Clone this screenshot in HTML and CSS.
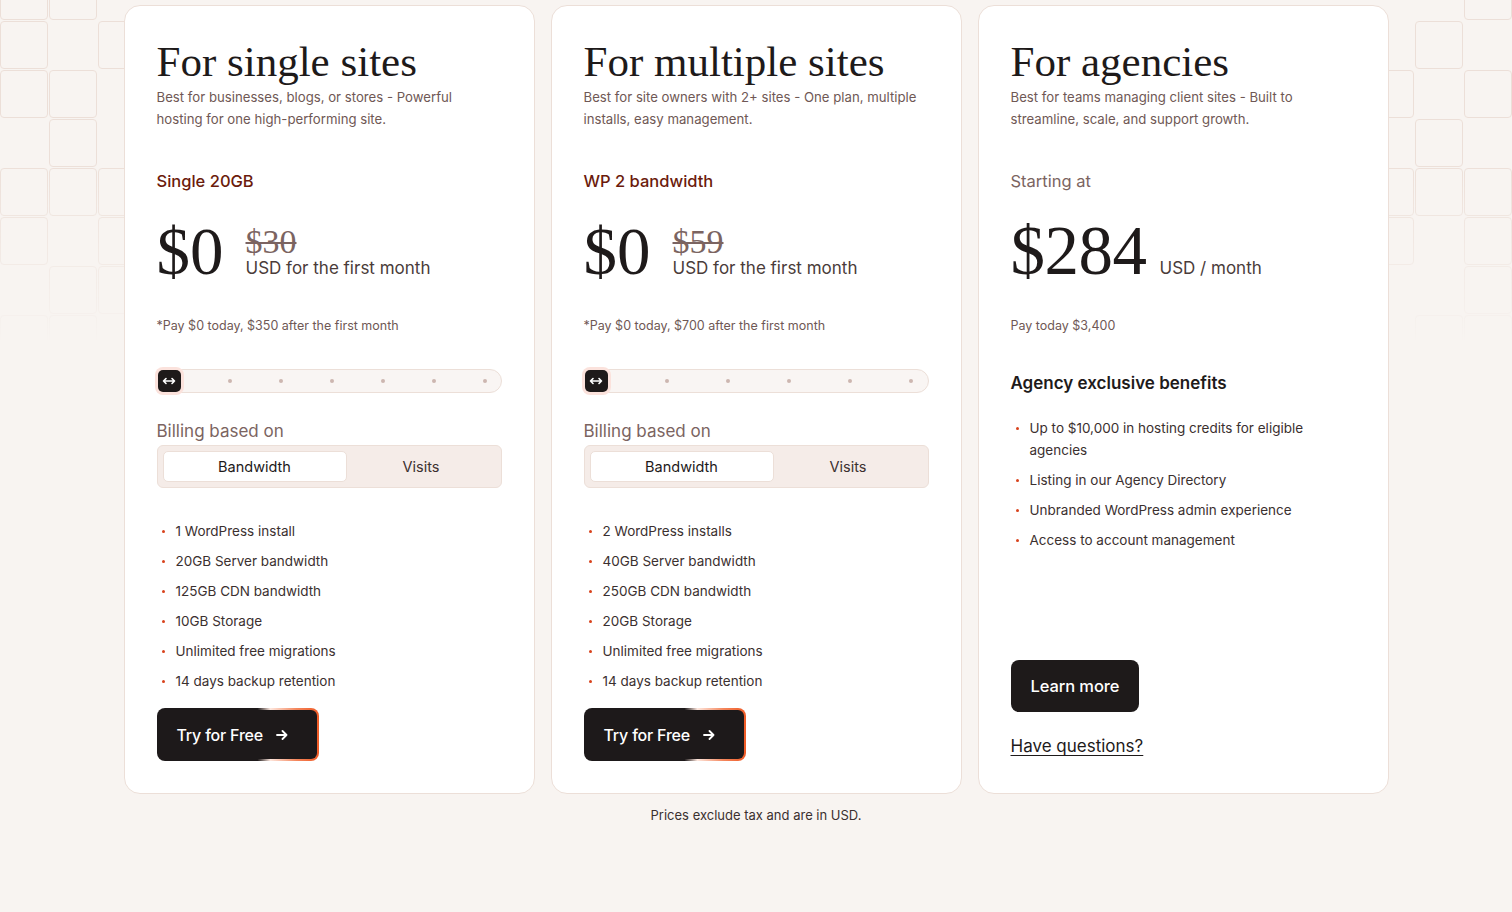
FILE: index.html
```html
<!DOCTYPE html>
<html lang="en">

<head>
    <meta charset="UTF-8">
    <meta name="viewport" content="width=device-width, initial-scale=1.0">
    <title>Plans</title>
    <link rel="stylesheet" href="styles.css">
</head>

<body>
    <div class="page">
        <!-- decorative tile grid behind the cards -->
        <div class="tiles tiles-left">
            <i class="on"></i><i class="on"></i><i></i>
            <i class="on"></i><i></i><i class="on"></i>
            <i class="on"></i><i class="on"></i><i></i>
            <i></i><i class="on"></i><i></i>
            <i class="on"></i><i class="on"></i><i class="on"></i>
            <i class="on"></i><i></i><i class="on"></i>
            <i></i><i class="on"></i><i class="on"></i>
            <i class="on"></i><i class="on"></i><i></i>
        </div>
        <div class="tiles tiles-right">
            <i></i><i></i><i class="on"></i>
            <i></i><i class="on"></i><i></i>
            <i class="on"></i><i></i><i class="on"></i>
            <i></i><i class="on"></i><i></i>
            <i class="on"></i><i class="on"></i><i class="on"></i>
            <i class="on"></i><i></i><i class="on"></i>
            <i></i><i></i><i class="on"></i>
            <i></i><i class="on"></i><i class="on"></i>
        </div>

        <div class="plans">
            <section class="card">
                <h2 class="card-title">For single sites</h2>
                <p class="card-desc">Best for businesses, blogs, or stores - Powerful hosting for one high-performing site.</p>
                <p class="plan-name">Single 20GB</p>
                <div class="price price-promo">
                    <span class="price-amount">$0</span>
                    <div class="price-side">
                        <s class="price-old">$30</s>
                        <span class="price-unit">USD for the first month</span>
                    </div>
                </div>
                <p class="price-note">*Pay $0 today, $350 after the first month</p>

                <div class="slider">
                    <span class="slider-handle">
                        <svg width="14" height="8" viewBox="0 0 14 8" fill="none" stroke="#fff" stroke-width="1.6" stroke-linecap="round" stroke-linejoin="round"><path d="M1.5 4h11M4 1.5L1.5 4 4 6.5M10 1.5l2.5 2.5L10 6.5"/></svg>
                    </span>
                    <span class="dot"></span><span class="dot"></span><span class="dot"></span>
                    <span class="dot"></span><span class="dot"></span><span class="dot"></span>
                </div>

                <p class="billing-label">Billing based on</p>
                <div class="segment">
                    <button class="segment-btn active">Bandwidth</button>
                    <button class="segment-btn">Visits</button>
                </div>

                <ul class="features">
                    <li>1 WordPress install</li>
                    <li>20GB Server bandwidth</li>
                    <li>125GB CDN bandwidth</li>
                    <li>10GB Storage</li>
                    <li>Unlimited free migrations</li>
                    <li>14 days backup retention</li>
                </ul>

                <a class="btn btn-try" href="#">Try for Free
                    <svg width="12" height="10" viewBox="0 0 12 10" fill="none" stroke="#fff" stroke-width="1.8" stroke-linecap="round" stroke-linejoin="round"><path d="M1 5h9.5M6.5 1l4 4-4 4"/></svg>
                </a>
            </section>

            <section class="card">
                <h2 class="card-title">For multiple sites</h2>
                <p class="card-desc">Best for site owners with 2+ sites - One plan, multiple installs, easy management.</p>
                <p class="plan-name">WP 2 bandwidth</p>
                <div class="price price-promo">
                    <span class="price-amount">$0</span>
                    <div class="price-side">
                        <s class="price-old">$59</s>
                        <span class="price-unit">USD for the first month</span>
                    </div>
                </div>
                <p class="price-note">*Pay $0 today, $700 after the first month</p>

                <div class="slider">
                    <span class="slider-handle">
                        <svg width="14" height="8" viewBox="0 0 14 8" fill="none" stroke="#fff" stroke-width="1.6" stroke-linecap="round" stroke-linejoin="round"><path d="M1.5 4h11M4 1.5L1.5 4 4 6.5M10 1.5l2.5 2.5L10 6.5"/></svg>
                    </span>
                    <span class="dot"></span><span class="dot"></span><span class="dot"></span>
                    <span class="dot"></span><span class="dot"></span>
                </div>

                <p class="billing-label">Billing based on</p>
                <div class="segment">
                    <button class="segment-btn active">Bandwidth</button>
                    <button class="segment-btn">Visits</button>
                </div>

                <ul class="features">
                    <li>2 WordPress installs</li>
                    <li>40GB Server bandwidth</li>
                    <li>250GB CDN bandwidth</li>
                    <li>20GB Storage</li>
                    <li>Unlimited free migrations</li>
                    <li>14 days backup retention</li>
                </ul>

                <a class="btn btn-try" href="#">Try for Free
                    <svg width="12" height="10" viewBox="0 0 12 10" fill="none" stroke="#fff" stroke-width="1.8" stroke-linecap="round" stroke-linejoin="round"><path d="M1 5h9.5M6.5 1l4 4-4 4"/></svg>
                </a>
            </section>

            <section class="card">
                <h2 class="card-title">For agencies</h2>
                <p class="card-desc">Best for teams managing client sites - Built to streamline, scale, and support growth.</p>
                <p class="plan-start">Starting at</p>
                <div class="price">
                    <span class="price-amount price-large">$284</span>
                    <div class="price-side">
                        <span class="price-unit">USD / month</span>
                    </div>
                </div>
                <p class="price-note">Pay today $3,400</p>

                <h3 class="benefits-title">Agency exclusive benefits</h3>
                <ul class="features benefits">
                    <li>Up to $10,000 in hosting credits for eligible agencies</li>
                    <li>Listing in our Agency Directory</li>
                    <li>Unbranded WordPress admin experience</li>
                    <li>Access to account management</li>
                </ul>

                <div class="card-actions">
                    <a class="btn" href="#">Learn more</a>
                    <a class="questions" href="#">Have questions?</a>
                </div>
            </section>
        </div>

        <p class="footnote">Prices exclude tax and are in USD.</p>
    </div>
</body>

</html>
```

FILE: styles.css
```css
:root {
    --page-bg: #f8f4f1;
    --ink: #1e1a1a;
    --text: #3b302f;
    --muted: #6f5855;
    --soft: #7b6461;
    --line: #ecdfd8;
    --accent: #d8421c;
    --plan-red: #6b1b0c;
    --serif: 'Liberation Serif', 'Times New Roman', serif;
    --sans: 'Inter', 'Liberation Sans', sans-serif;
}

* {
    box-sizing: border-box;
}

body {
    margin: 0;
    background: var(--page-bg);
    font-family: var(--sans);
    color: var(--text);
}

.page {
    position: relative;
    padding-top: 5px;
    min-height: 912px;
    overflow: hidden;
}

/* background tiles */
.tiles {
    position: absolute;
    top: -28px;
    display: grid;
    grid-template-columns: repeat(3, 48px);
    grid-auto-rows: 48px;
    gap: 1px;
    -webkit-mask-image: linear-gradient(to bottom, #000 0, #000 190px, transparent 370px);
    mask-image: linear-gradient(to bottom, #000 0, #000 190px, transparent 370px);
}

.tiles-left {
    left: 0;
}

.tiles-right {
    right: 0;
}

.tiles i {
    display: block;
    border-radius: 4px;
}

.tiles i.on {
    border: 1px solid #ecdfd8;
}

.plans {
    position: relative;
    z-index: 1;
    display: grid;
    grid-template-columns: repeat(3, 411px);
    gap: 16px;
    justify-content: center;
}

.card {
    display: flex;
    flex-direction: column;
    background: #fff;
    border: 1px solid var(--line);
    border-radius: 16px;
    padding: 32px;
}

.card p,
.card h2,
.card h3 {
    margin: 0;
}

.card-title {
    font-family: var(--serif);
    font-weight: 400;
    font-size: 43px;
    line-height: 48px;
    color: var(--ink);
}

.card-desc {
    max-width: 340px;
    font-size: 13.2px;
    line-height: 22px;
    color: var(--muted);
}

.plan-name,
.plan-start {
    margin-top: 39px !important;
    font-size: 16.5px;
    line-height: 24px;
    font-weight: 500;
    color: var(--plan-red);
}

.plan-start {
    font-weight: 400;
    color: var(--soft);
}

.price {
    display: flex;
    align-items: last baseline;
    gap: 13px;
    margin-top: 25px;
    height: 66px;
}

.price-promo {
    gap: 22px;
}

.price-amount {
    font-family: var(--serif);
    font-size: 67px;
    line-height: 66px;
    color: var(--ink);
}

.price-large {
    font-size: 69px;
    letter-spacing: -0.5px;
}

.price-side {
    display: flex;
    flex-direction: column;
}

.price-old {
    font-family: var(--serif);
    font-size: 34px;
    line-height: 30px;
    color: var(--soft);
    text-decoration-thickness: 2px;
}

.price-unit {
    font-size: 17px;
    line-height: 22px;
    color: #4a3c3a;
}

.price-note {
    margin-top: 32px !important;
    font-size: 12.5px;
    line-height: 20px;
    color: var(--muted);
}

/* plan size slider */
.slider {
    display: flex;
    align-items: center;
    justify-content: space-between;
    margin-top: 33px;
    height: 24px;
    padding: 0 14px 0 0;
    background: #f9f5f3;
    border: 1px solid var(--line);
    border-radius: 12px;
}

.slider-handle {
    display: flex;
    align-items: center;
    justify-content: center;
    width: 23px;
    height: 22px;
    background: var(--ink);
    border-radius: 5px;
    box-shadow: 0 0 0 3px #fbe2dc;
}

.dot {
    width: 4px;
    height: 4px;
    border-radius: 50%;
    background: #cdb6b0;
}

.billing-label {
    margin-top: 26px !important;
    font-size: 17px;
    line-height: 24px;
    color: var(--soft);
}

.segment {
    display: grid;
    grid-template-columns: 184px 1fr;
    margin-top: 2px;
    height: 43px;
    padding: 5px;
    background: #f5ece8;
    border: 1px solid var(--line);
    border-radius: 6px;
}

.segment-btn {
    font-family: var(--sans);
    font-size: 14.5px;
    color: #3b302f;
    background: transparent;
    border: 1px solid transparent;
    border-radius: 5px;
    padding: 0;
    cursor: pointer;
}

.segment-btn.active {
    background: #fff;
    border-color: var(--line);
    color: var(--ink);
}

/* feature lists */
.features {
    list-style: none;
    margin: 32px 0 0;
    padding: 0;
    display: flex;
    flex-direction: column;
    gap: 8px;
}

.features li {
    position: relative;
    padding-left: 19px;
    font-size: 13.5px;
    line-height: 22px;
    color: var(--text);
}

.features li::before {
    content: "";
    position: absolute;
    left: 5px;
    top: 10px;
    width: 3px;
    height: 3px;
    border-radius: 50%;
    background: var(--accent);
}

.benefits-title {
    margin-top: 35px !important;
    font-size: 17px;
    line-height: 24px;
    font-weight: 600;
    color: var(--ink);
}

.benefits {
    margin-top: 22px;
    max-width: 320px;
}

.btn {
    display: inline-flex;
    align-items: center;
    gap: 14px;
    align-self: flex-start;
    height: 52px;
    padding: 0 20px;
    background: var(--ink);
    color: #fff;
    font-size: 16.5px;
    font-weight: 500;
    letter-spacing: -0.1px;
    text-decoration: none;
    border-radius: 8px;
}

.btn-try {
    margin-top: 16px;
    height: 53px;
    padding: 0 29px 0 18px;
    font-size: 16px;
    letter-spacing: -0.2px;
    gap: 13px;
    border: 2px solid transparent;
    background:
        linear-gradient(#1d191a, #1d191a) padding-box,
        linear-gradient(90deg, #1d191a 0%, #1d191a 62%, #fde6dd 70%, #f4875d 86%, #ef5a25 100%) border-box;
}

.card-actions {
    margin-top: auto;
    display: flex;
    flex-direction: column;
    gap: 22px;
    padding-bottom: 3px;
}

.questions {
    align-self: flex-start;
    font-size: 17px;
    line-height: 24px;
    color: var(--ink);
    text-decoration: underline;
    text-underline-offset: 3px;
    text-decoration-thickness: 1px;
}

.footnote {
    position: relative;
    z-index: 1;
    margin: 11px 0 0;
    text-align: center;
    font-size: 13px;
    line-height: 20px;
    color: var(--text);
}
```
